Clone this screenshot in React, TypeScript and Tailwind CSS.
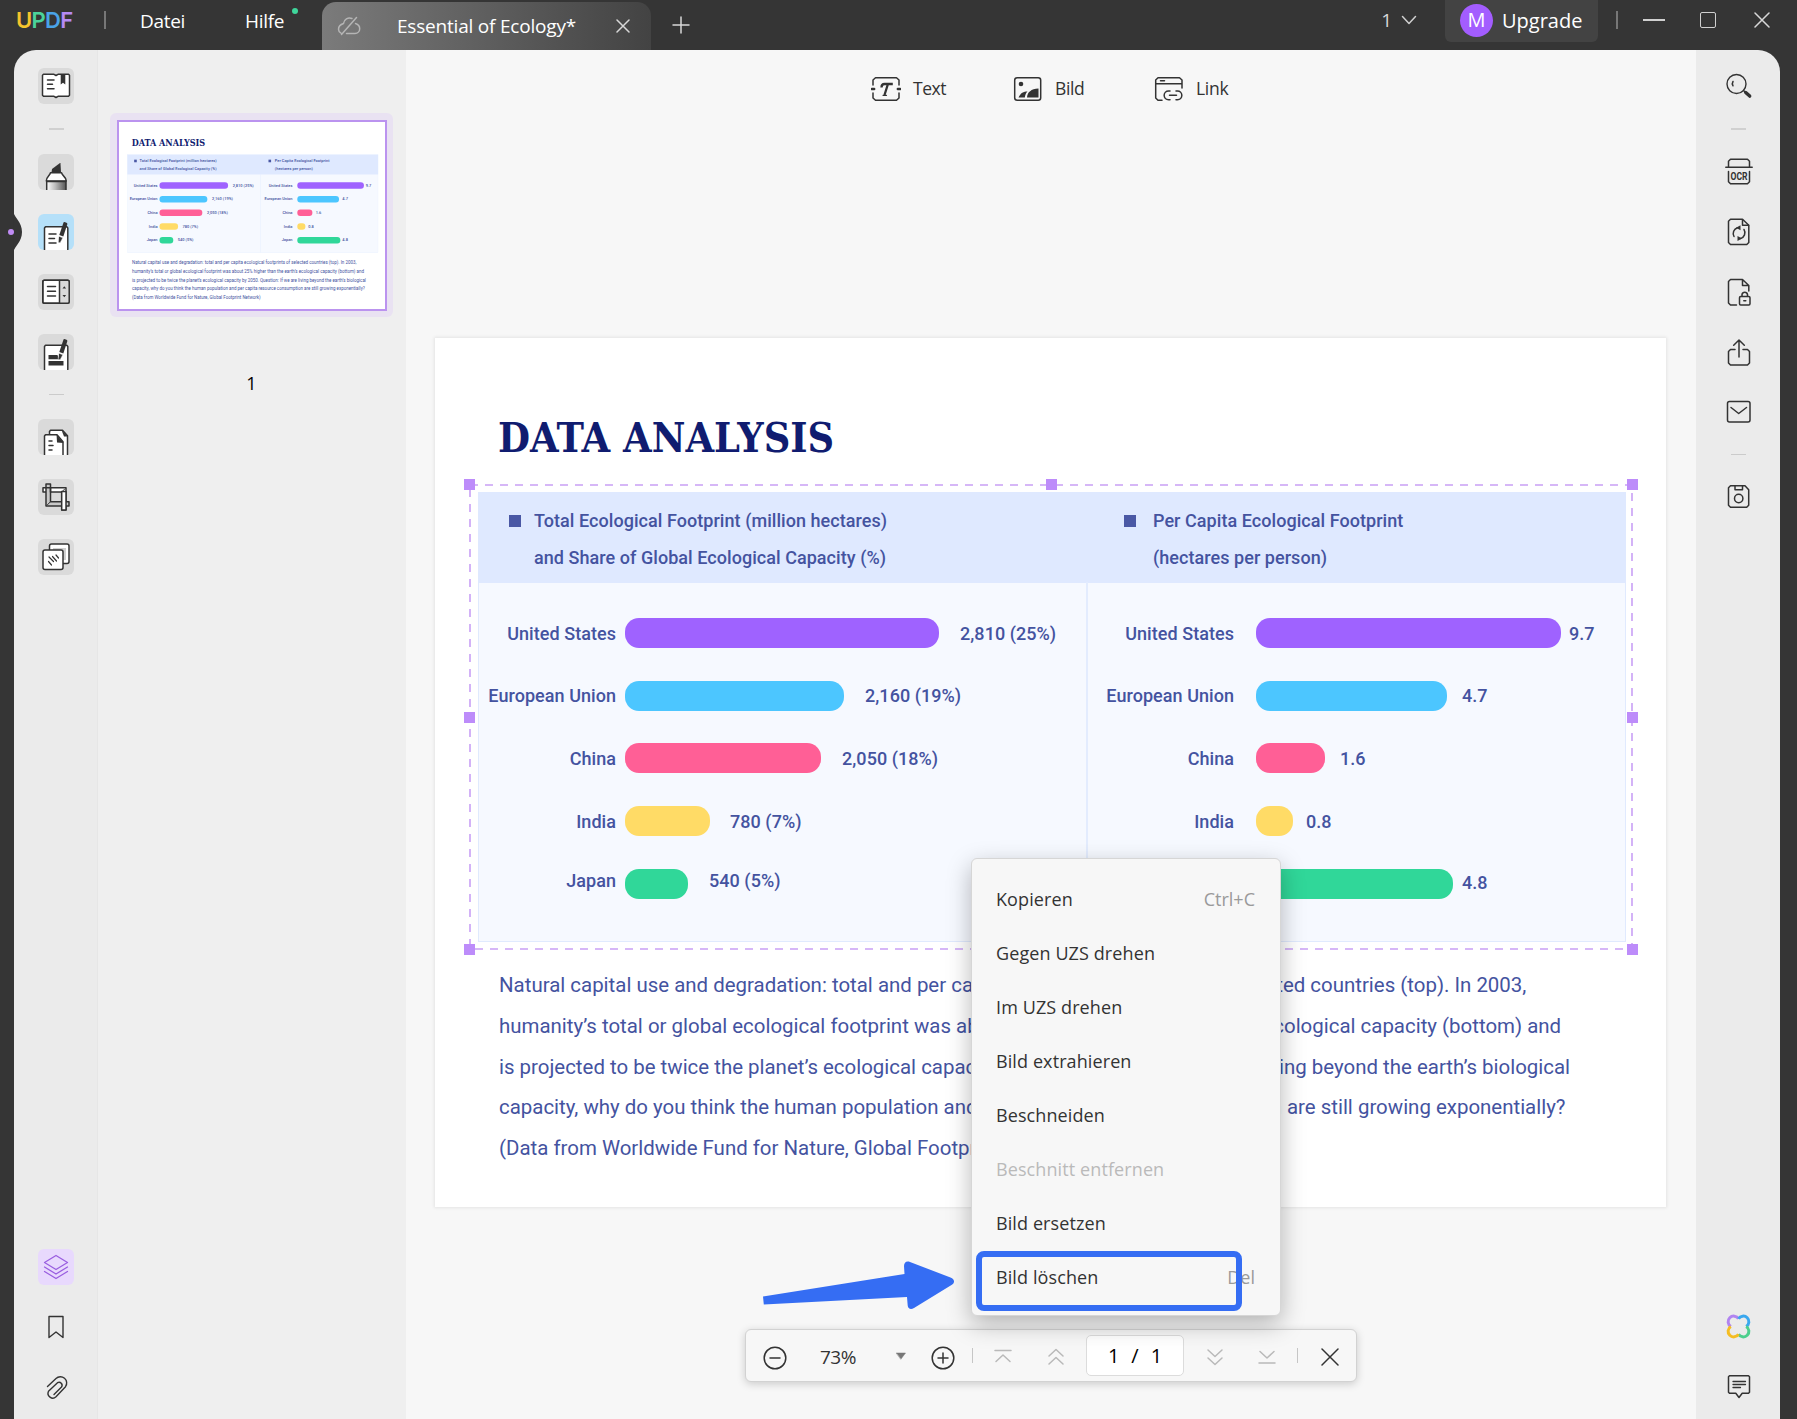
import type { ReactNode } from "react";
import clsx from "clsx";

type Row = { name: string; value: string; width: number; gap: number };

const barColors = ["#9f62ff", "#4cc6ff", "#ff5f96", "#ffdb66", "#30d799"];

const totalRows: Row[] = [
  { name: "United States", value: "2,810 (25%)", width: 314, gap: 21 },
  { name: "European Union", value: "2,160 (19%)", width: 219, gap: 21 },
  { name: "China", value: "2,050 (18%)", width: 196, gap: 21 },
  { name: "India", value: "780 (7%)", width: 85, gap: 20 },
  { name: "Japan", value: "540 (5%)", width: 63, gap: 21 },
];

const perCapitaRows: Row[] = [
  { name: "United States", value: "9.7", width: 305, gap: 8 },
  { name: "European Union", value: "4.7", width: 191, gap: 15 },
  { name: "China", value: "1.6", width: 69, gap: 15 },
  { name: "India", value: "0.8", width: 37, gap: 13 },
  { name: "Japan", value: "4.8", width: 197, gap: 9 },
];

const paragraph = [
  "Natural capital use and degradation: total and per capita ecological footprints of selected countries (top). In 2003,",
  "humanity’s total or global ecological footprint was about 25% higher than the earth’s ecological capacity (bottom) and",
  "is projected to be twice the planet’s ecological capacity by 2050. Question: If we are living beyond the earth’s biological",
  "capacity, why do you think the human population and per capita resource consumption are still growing exponentially?",
  "(Data from Worldwide Fund for Nature, Global Footprint Network)",
];

const menuItems = [
  { label: "Kopieren", shortcut: "Ctrl+C" },
  { label: "Gegen UZS drehen" },
  { label: "Im UZS drehen" },
  { label: "Bild extrahieren" },
  { label: "Beschneiden" },
  { label: "Beschnitt entfernen", disabled: true },
  { label: "Bild ersetzen" },
  { label: "Bild löschen", shortcut: "Del" },
];

function Icon({ w, h, children, className }: { w: number; h: number; children: ReactNode; className?: string }) {
  return (
    <svg
      width={w}
      height={h}
      viewBox={`0 0 ${w} ${h}`}
      fill="none"
      stroke="currentColor"
      strokeWidth={1.5}
      strokeLinecap="round"
      strokeLinejoin="round"
      className={clsx("shrink-0", className)}
    >
      {children}
    </svg>
  );
}

function Tile({ color = "bg-[#dadada]", className, children }: { color?: string; className?: string; children: ReactNode }) {
  return (
    <button className={clsx("size-9 shrink-0 overflow-hidden rounded-[6px]", color, className)}>
      <Icon w={36} h={36}>
        {children}
      </Icon>
    </button>
  );
}

function Pen() {
  return (
    <g fill="#333" stroke="none">
      <path d="M25.6 8.2l1-.1 2.4.9.4 1-4.1 12.4-4-1.4z" />
      <path d="M20.9 22.3l3.9 1.4-2.4 4.7-1.5.5-.5-1.2z" stroke="#fff" strokeWidth=".5" />
    </g>
  );
}

function Logo() {
  return (
    <div className="flex h-10 w-[58px] items-center font-['Inter',sans-serif] text-[22px] leading-none font-semibold tracking-[-0.7px]">
      <span className="text-[#f6c42d]">U</span>
      <span className="text-[#4bd29a]">P</span>
      <span className="text-[#4aa3e8]">D</span>
      <span className="text-[#b68af5]">F</span>
    </div>
  );
}

function TitleBar() {
  return (
    <header className="flex h-[50px] shrink-0 items-start text-[19px] text-white">
      <div className="ml-[16px]">
        <Logo />
      </div>
      <div className="mt-[11px] ml-[30px] h-[18px] w-[2px] bg-[#777]" />
      <span className="mt-[7px] ml-[34px] w-[46px] leading-7 tracking-[-0.3px]">Datei</span>
      <span className="mt-[7px] ml-[59px] w-[47px] leading-7 tracking-[-0.3px]">Hilfe</span>
      <span className="mt-2 size-[6px] rounded-full bg-[#3fd69b]" />
      <div className="mt-[2px] ml-[24px] flex h-12 w-[329px] items-center rounded-t-[14px] bg-linear-to-r from-[#7b7b7b] to-[#434343] pl-[15px]">
        <Icon w={24} h={20} className="text-[#b5b5b5]">
          <path d="M15 2.500a6 6 0 0 0-8.500 5C3.500 8.500 1.500 10.500 1.500 13.300a4.500 4.500 0 0 0 2.500 3.900M18.500 7.500c2.800.8 4.200 2.800 4.200 5.200a4.700 4.700 0 0 1-4.700 4.700H9.500M19.500 1.500L4.500 18.500" />
        </Icon>
        <span className="ml-[36px] w-[190px] leading-7 tracking-[-0.2px]">Essential of Ecology*</span>
        <Icon w={14} h={14} className="ml-[29px] text-[#d8d8d8]">
          <path d="M1 1l12 12M13 1L1 13" />
        </Icon>
      </div>
      <Icon w={18} h={18} className="mt-4 ml-[21px] text-[#d8d8d8]">
        <path d="M9 1v16M1 9h16" />
      </Icon>
      <span className="mt-[6px] ml-auto leading-7 text-[#d8d8d8]">1</span>
      <Icon w={16} h={12} className="mt-[14px] ml-[9px] text-[#d0d0d0]">
        <path d="M1.5 2.500L8 9.500l6.500-7" />
      </Icon>
      <div className="ml-[28px] flex h-[42px] w-[153px] items-center rounded-b-[6px] bg-[#434343] pl-[15px] text-[20px]">
        <span className="-mt-[2px] flex size-[33px] items-center justify-center rounded-full bg-[#a35dff]">M</span>
        <span className="ml-[9px]">Upgrade</span>
      </div>
      <div className="mt-[11px] ml-[18px] h-[18px] w-[2px] bg-[#777]" />
      <div className="mt-[19px] ml-[25px] h-[1.5px] w-[22px] bg-[#d0d0d0]" />
      <div className="mt-3 ml-[35px] size-4 rounded-[2px] border-[1.5px] border-[#d0d0d0]" />
      <Icon w={16} h={16} className="mt-3 mr-[27px] ml-[38px] text-[#d8d8d8]">
        <path d="M1 1l14 14M15 1L1 15" />
      </Icon>
    </header>
  );
}

function LeftRail() {
  return (
    <nav className="relative flex w-[83px] shrink-0 flex-col bg-[#ebebeb] pt-[18px] pl-6 text-[#333]">
      {/* notch that marks the active tool */}
      <svg className="absolute top-[160px] -left-[14px]" width="24" height="44" viewBox="0 0 24 44">
        <path d="M13.5 2c1 6 8.500 10 8.500 20s-7.500 14-8.500 20z" fill="#353535" />
        <circle cx="11" cy="22" r="3" fill="#c08cf5" />
      </svg>

      <Tile>
        <path d="M5.5 6.300H16l2 1.200 2-1.200h10.500l1 1v20l-1 1H20l-2 1.200-2-1.200H5.500l-1-1v-20z" fill="#fff" />
        <path d="M22.7 6.500h4.600v10L25 14.700l-2.300 1.800z" fill="#333" stroke="none" />
        <path d="M9.5 12h6.500M9.500 16.300h5M9.500 20.700h6.500" />
      </Tile>
      <div className="mt-6 ml-[11px] h-[2px] w-[15px] bg-[#d0d0d0]" />
      <Tile className="mt-6">
        <defs>
          <linearGradient id="marker">
            <stop offset="0" stopColor="#fff" />
            <stop offset=".45" stopColor="#bbb" />
            <stop offset="1" stopColor="#555" />
          </linearGradient>
        </defs>
        <path d="M13.5 18.500l.5-3.500 8-6 .5.500.5 9z" fill="#333" stroke="none" />
        <path d="M12.5 18.700h11c.5 3.300 4.800 4 4.800 8.300H8.300c0-4.300 3.700-5 4.200-8.300z" fill="#fff" />
        <path d="M8.7 27.500h19.300V38H8.700z" fill="url(#marker)" />
      </Tile>
      <Tile color="bg-[#b5e0f9]" className="mt-6">
        <path d="M6.5 38V14l1-1.300h21.300l1 1.300v24z" fill="#fff" />
        <path d="M11 20h7M11 24.500h5.500M11 29h7" />
        <Pen />
      </Tile>
      <Tile className="mt-6">
        <rect x="4.8" y="6.3" width="26.4" height="23" rx="1.5" fill="#fff" />
        <path d="M21.5 6.300h9.700v23h-9.700z" fill="#dadada" stroke="none" />
        <rect x="4.8" y="6.3" width="26.4" height="23" rx="1.5" />
        <path d="M21.5 6.500v22.800M9.500 12.500h8M9.500 17.200h8M9.500 22h8" />
        <path d="M24.5 14.500l1.800-2.200 1.800 2.200zM24.500 21l1.800 2.200 1.800-2.200z" fill="#333" stroke="none" />
      </Tile>
      <Tile className="mt-6">
        <path d="M6.5 38V12.500l1-1.300h21.300l1 1.300V38z" fill="#fff" />
        <path d="M10.5 21h9l1.500 4.300H10.500zM10.500 27h15v4.500h-15z" fill="#333" stroke="none" />
        <g transform="translate(0 -3)">
          <Pen />
        </g>
      </Tile>
      <div className="mt-6 ml-[11px] h-px w-[15px] bg-[#cbcbcb]" />
      <Tile className="mt-6">
        <path d="M11.5 16v-3.500l1-1.300h12l5 5.500V38h-5" fill="#fff" />
        <path d="M23.5 11l6.500 6.500h-4z" fill="#333" stroke="none" />
        <path d="M6.5 38V17l1-1.300H19l6 7V38z" fill="#fff" />
        <path d="M18.5 15.500l7 8.500-6.500-.5z" fill="#333" stroke="none" />
        <path d="M11 22h3M11 26.500h4M11 31h3" />
      </Tile>
      <Tile className="mt-6">
        <path d="M5 8.700h23V31h-4.300V13H5z" fill="#fff" />
        <path d="M8 5h4.500v17.700H31V27H8z" fill="#c8c8c8" />
        <path d="M8 8.700h4.500v4.300" />
        <path d="M23.7 12.500h4.300V31h-4.300z" fill="#fff" />
        <path d="M9.5 25.700l3-3M23.700 13l3-3" strokeWidth="1" />
      </Tile>
      <Tile className="mt-6">
        <rect x="11.5" y="5" width="19.5" height="19.5" rx="2" fill="#fff" />
        <path d="M15 9h13v12h-3V11H15z" fill="#cfcfcf" stroke="none" />
        <rect x="5" y="11" width="20" height="19.5" rx="2" fill="#fff" />
        <path d="M14.500 17.500l4 4.500M11 18l4.500 4.500M10.500 22.500l3 3.500M18 16l2.500 3" strokeWidth="1.2" />
      </Tile>

      <Tile color="bg-[#e8d9fd]" className="mt-[674px] text-[#9a5fe0]">
        <path d="M18 6.500l11.500 7L18 20.500 6.500 13.500zM6.500 18L18 25l11.500-7M6.500 22.500L18 29.500l11.500-7" strokeWidth="1.3" />
      </Tile>
      <Icon w={36} h={26} className="mt-[29px]">
        <path d="M11 2.500h14v21l-7-5.500-7 5.500z" strokeWidth="1.4" />
      </Icon>
      <Icon w={36} h={28} className="mt-[33px]">
        <path
          d="M9.5 12.500l8.500-8a6.300 6.300 0 0 1 9.500 8.200L18 22.700a4.700 4.700 0 0 1-7.500-5.400l9-8.600a3 3 0 0 1 4 4.300l-7.500 7.500"
          transform="translate(0 1)"
          strokeWidth="1.4"
        />
      </Icon>
    </nav>
  );
}

function RightRail() {
  return (
    <nav className="flex w-[84px] shrink-0 flex-col items-center bg-[#ebebeb] pt-[23px] pl-[2px] text-[#333]">
      <Icon w={28} h={28}>
        <circle cx="11.5" cy="11" r="9.5" strokeWidth="1.4" />
        <path d="M8 8.500c-.8 1.300-.8 3 0 4.300" />
        <path d="M18.5 17.500l2 1.700" />
        <path d="M20.7 19.500l4 3.600" strokeWidth="3.4" />
      </Icon>
      <div className="mt-[27px] mr-[2px] h-[2px] w-[15px] bg-[#d0d0d0]" />
      <Icon w={28} h={28} className="mt-[28px]">
        <path d="M3.5 8.500V3.200l2-2h17l2 2v5.300M.8 9.300h26.400M3.500 13.500v10.300l2 2h17l2-2V13.500" />
        <text
          x="14"
          y="22"
          textAnchor="middle"
          textLength="17"
          lengthAdjust="spacingAndGlyphs"
          fill="#333"
          stroke="none"
          className="font-['Roboto',sans-serif] text-[11px] font-bold"
        >
          OCR
        </text>
      </Icon>
      <Icon w={28} h={28} className="mt-[32px]">
        <path d="M5.5 1.200h12l6.300 6v17.300l-2 2H5.500l-2-2V3.200z" />
        <path d="M17.5 2v5.200h6" />
        <path d="M9 18.500a6 6 0 0 1 3.500-8.700M19 11.500a6 6 0 0 1-3.500 9" />
        <path d="M15.500 7.200v5L11 9.700zM12.500 18v5l4.500-2.500z" fill="#333" stroke="none" />
      </Icon>
      <Icon w={28} h={30} className="mt-8">
        <path d="M11.5 27h-6l-2-2V3.500l2-2h12l6.300 6V13M17.500 2v5.500h6" />
        <rect x="14.5" y="18.500" width="10.500" height="8.500" rx="1.2" />
        <path d="M17 18v-1.500a2.800 2.800 0 0 1 5.500 0V18M18.800 22.700h2" />
      </Icon>
      <Icon w={28} h={28} className="mt-[31px]">
        <path d="M10 10.500H5.500l-2 2V24l2 2h17l2-2V12.500l-2-2H18M14 18V1.500M8.700 6.200L14 1l5.300 5.200" />
      </Icon>
      <Icon w={28} h={26} className="mt-[33px]">
        <rect x="2.5" y="1.5" width="22.5" height="20.5" rx="2" />
        <path d="M6 7.500l7.700 6L21.500 7.500" />
      </Icon>
      <div className="mt-[28px] mr-[2px] h-px w-[15px] bg-[#cbcbcb]" />
      <Icon w={28} h={26} className="mt-[29px]">
        <path d="M5.5 1.700h14.500l3.700 4v15.500l-2 2H5.500l-2-2V3.700z" />
        <path d="M10 2v3.700h7.500V2" />
        <circle cx="13.7" cy="14.5" r="4.2" />
      </Icon>
      <Icon w={28} h={28} className="mt-[803px]">
        <g strokeWidth="3" strokeLinecap="butt">
          <path d="M5.800 13.500A5.600 5.600 0 1 1 13.500 5.800" stroke="#b184f0" />
          <path d="M13.500 5.800A5.600 5.600 0 1 1 21.200 13.500" stroke="#3aa7ee" />
          <path d="M21.200 13.500A5.600 5.600 0 1 1 13.500 21.200" stroke="#4dcf8d" />
          <path d="M13.500 21.200A5.600 5.600 0 1 1 5.800 13.500" stroke="#f5bd22" />
        </g>
      </Icon>
      <Icon w={28} h={28} className="mt-[33px]">
        <path d="M4.5 1.700h19l1 1v15.600l-1 1H17.200L14 23.500l-3.200-4.200H4.500l-1-1V2.700z" />
        <path d="M8 7.500h12.500M8 10.500h12.500M8 13.500h7.500" strokeWidth="1.3" />
      </Icon>
    </nav>
  );
}

function BarColumn({ rows, labelClass, gapClass }: { rows: Row[]; labelClass: string; gapClass: string }) {
  return (
    <div className="flex flex-col gap-[32.7px] pt-[36px]">
      {rows.map((row, i) => (
        <div key={row.name} className={clsx("flex h-[30px] items-center whitespace-nowrap", gapClass)}>
          <span className={clsx("shrink-0 text-right", labelClass, i === 4 && "-mt-[6px]")}>{row.name}</span>
          <div className="flex h-full items-center">
            <div className="h-full rounded-[14px]" style={{ width: row.width, background: barColors[i] }} />
            <span
              className={clsx(i === 4 && rows === totalRows && "-mt-[6px]", i === 4 && rows === perCapitaRows && "-mt-[3px]")}
              style={{ marginLeft: row.gap }}
            >
              {row.value}
            </span>
          </div>
        </div>
      ))}
    </div>
  );
}

function Handle({ className }: { className: string }) {
  return <span className={clsx("absolute size-[11px] bg-[#bd8cfa]", className)} />;
}

function Selection() {
  return (
    <div className="absolute -top-[9px] -left-[10px] h-[466px] w-[1164px]">
      <svg className="absolute inset-0" width="1164" height="466">
        <rect x="1" y="1" width="1162" height="464" fill="none" stroke="#c9a0f5" strokeWidth="1.6" strokeDasharray="8 7" />
      </svg>
      <Handle className="-top-[5px] -left-[5px]" />
      <Handle className="-top-[5px] left-[577px]" />
      <Handle className="-top-[5px] -right-[5px]" />
      <Handle className="top-[228px] -left-[5px]" />
      <Handle className="top-[228px] -right-[5px]" />
      <Handle className="-bottom-[5px] -left-[5px]" />
      <Handle className="-right-[5px] -bottom-[5px]" />
    </div>
  );
}

function PdfPage({ selected = false }: { selected?: boolean }) {
  return (
    <article className="flex h-[869px] w-[1231px] flex-col bg-white font-['Roboto',sans-serif] text-[#4453a0]">
      <h1 className="mt-[74px] ml-[63px] font-['DejaVu_Serif_Condensed','DejaVu_Serif',serif] text-[41px] leading-[52px] font-bold whitespace-nowrap text-[#101c70]">
        DATA ANALYSIS
      </h1>
      <section className="relative mt-[28px] ml-[43px] h-[450px] w-[1148px] border border-[#e0eafe] bg-[#f6f9ff] text-[18px] font-medium tracking-[0.05px]">
        <div className="-m-px flex h-[91px] bg-[#dfe9ff] pt-[10px] leading-[37px]">
          <span className="mt-[13px] ml-[31px] size-3 bg-[#4a58a5]" />
          <p className="ml-[13px] w-[590px]">
            Total Ecological Footprint (million hectares)
            <br />
            and Share of Global Ecological Capacity (%)
          </p>
          <span className="mt-[13px] size-3 bg-[#4a58a5]" />
          <p className="ml-[17px]">
            Per Capita Ecological Footprint
            <br />
            (hectares per person)
          </p>
        </div>
        <div className="flex h-[358px]">
          <div className="w-[609px] border-r-2 border-[#e3ecfe]">
            <BarColumn rows={totalRows} labelClass="w-[137px]" gapClass="gap-[9px]" />
          </div>
          <BarColumn rows={perCapitaRows} labelClass="w-[146px]" gapClass="gap-[22px]" />
        </div>
        {selected && <Selection />}
      </section>
      <div className="mt-[23px] ml-[64px] text-[20.46px] leading-[40.8px] whitespace-nowrap">
        {paragraph.map((line) => (
          <p key={line}>{line}</p>
        ))}
      </div>
    </article>
  );
}

function Thumbnails() {
  return (
    <aside className="flex w-[309px] shrink-0 flex-col items-center bg-[#efefef] pt-[63px] shadow-[inset_1px_0_0_#e6e6e6]">
      <div className="h-[204px] w-[283px] rounded-[6px] bg-[#e9e2f2] p-[6.500px]">
        <div className="h-[191px] w-[270px] overflow-hidden border-2 border-[#bb93ef] bg-white">
          <div className="-mt-px -ml-px h-[869px] w-[1231px] origin-top-left scale-[0.2184]">
            <PdfPage />
          </div>
        </div>
      </div>
      <span className="mt-[52px] text-[18px] leading-7 text-black">1</span>
    </aside>
  );
}

function EditTools() {
  return (
    <div className="flex h-[77px] items-center pl-[465px] text-[17.5px] tracking-[-0.5px] text-[#333]">
      <Icon w={30} h={26}>
        <path d="M2 9V4l2.500-2.300h21L28 4v5M2 17v5l2.500 2.300h21L28 22v-5" />
        <path d="M.8 13h2.400M26.800 13h2.400" strokeWidth="2.4" />
        <path d="M10.500 11.500c0-2.500 1-3.500 3-3.500h8.300M16.800 8.500L13.500 19" strokeWidth="2.3" strokeLinecap="butt" />
        <path d="M12 19.300h3.500" strokeWidth="1.2" />
      </Icon>
      <span className="ml-3 w-[100px]">Text</span>
      <Icon w={30} h={26}>
        <rect x="1.7" y="1.7" width="26" height="22.6" rx="2.5" />
        <circle cx="8" cy="8" r="2.3" fill="#333" stroke="none" />
        <path d="M5.500 21.500c2-4.500 5-6 9-6-1.800 1.500-2.200 3.500-2.700 6zM14 21.500c.5-5.500 4-8.500 11.500-9v9z" fill="#333" stroke="none" />
      </Icon>
      <span className="ml-[12px] w-[99px] tracking-[-0.4px]">Bild</span>
      <Icon w={30} h={26}>
        <path d="M8 24.300H4L1.700 22V4L4 1.700h21.500L28 4v8M1.700 7.700H28M6.500 4.700h4" />
        <path d="M16 15h-1.500a4.300 4.300 0 0 0 0 8.700H16M22 15h1.500a4.300 4.300 0 0 1 0 8.700H22M15.500 19.300h7" />
      </Icon>
      <span className="ml-[12px] tracking-[-0.3px]">Link</span>
    </div>
  );
}

function ContextMenu() {
  return (
    <div className="absolute top-[808px] left-[565px] flex h-[458px] w-[310px] flex-col rounded-[6px] border border-[#d6d6d6] bg-[#f7f7f7] pt-[13px] text-[18px] shadow-[0_8px_24px_rgba(0,0,0,0.28)]">
      {menuItems.map((item) => (
        <div
          key={item.label}
          className={clsx(
            "flex h-[54px] items-center justify-between pr-[25px] pl-6",
            item.disabled ? "text-[#bababa]" : "text-[#333]"
          )}
        >
          <span className="tracking-[0.1px]">{item.label}</span>
          <span className="text-[#9a9a9a]">{item.shortcut}</span>
        </div>
      ))}
      <div className="absolute top-[392px] left-[4px] h-[60px] w-[266px] rounded-[8px] border-[6px] border-[#356df3]" />
    </div>
  );
}

function ZoomBar() {
  return (
    <div className="relative mt-[122px] ml-[339px] flex h-[53px] w-[612px] items-center rounded-[6px] border border-[#d2d2d2] bg-[#f7f7f7] pb-px pl-[17px] text-[#333] shadow-[0_2px_8px_rgba(0,0,0,0.18)]">
      <Icon w={24} h={24} className="mt-[5px]">
        <circle cx="12" cy="12" r="10.8" />
        <path d="M7 12h10" />
      </Icon>
      <span className="mt-[5px] ml-[33px] w-[42px] text-[19px] tracking-[-0.5px]">73%</span>
      <Icon w={12} h={10} className="mt-px ml-[33px] text-[#777]">
        <path d="M1.500 2h9L6 8z" fill="currentColor" strokeWidth=".5" />
      </Icon>
      <Icon w={24} h={24} className="mt-[5px] ml-[24px]">
        <circle cx="12" cy="12" r="10.8" />
        <path d="M7 12h10M12 7v10" />
      </Icon>
      <div className="ml-[17px] h-[15px] w-px bg-[#c6c6c6]" />
      <Icon w={18} h={18} className="mt-1 ml-[21px] text-[#b9b9b9]">
        <path d="M1 2.500h16M2 13.500l7-6.500 7 6.500" />
      </Icon>
      <Icon w={18} h={18} className="mt-1 ml-[35px] text-[#b9b9b9]">
        <path d="M2 8l7-6.500L16 8M2 16l7-6.500 7 6.500" />
      </Icon>
      <div className="ml-[21px] flex h-[41px] w-[98px] items-center justify-center gap-[12px] rounded-[5px] border border-[#dcdcdc] bg-white pt-[2px] text-[20px] text-black">
        <span>1</span>
        <span>/</span>
        <span>1</span>
      </div>
      <Icon w={18} h={18} className="mt-1 ml-[22px] text-[#b9b9b9]">
        <path d="M2 2l7 6.500L16 2M2 10l7 6.500 7-6.500" />
      </Icon>
      <Icon w={18} h={18} className="mt-1 ml-[34px] text-[#b9b9b9]">
        <path d="M2 3.500l7 6.500 7-6.500M1 15h16" />
      </Icon>
      <div className="ml-[21px] h-[15px] w-px bg-[#c6c6c6]" />
      <Icon w={18} h={18} className="mt-1 ml-[23px]">
        <path d="M1 1l16 16M17 1L1 17" />
      </Icon>
    </div>
  );
}

function Arrow() {
  return (
    <svg className="absolute top-[1208px] left-[354px]" width="200" height="56" viewBox="760 1258 200 56">
      <path
        d="M763 1296.500L904.500 1274l-.5-8c0-3.500 2.500-5.500 6-4l40.500 15.500c4.500 1.800 4.500 5.500 1 7.500l-37.500 23c-3.500 2-6 .5-6.300-2.500l-.7-8.500-143.200 7.500z"
        fill="#356df3"
      />
    </svg>
  );
}

export default function App() {
  return (
    <div className="flex h-[1419px] w-[1797px] flex-col overflow-hidden bg-[#353535] font-['Open_Sans','Noto_Sans',sans-serif]">
      <TitleBar />
      <div className="ml-[14px] flex w-[1766px] flex-1">
        <div className="flex [&>nav]:rounded-tl-[22px]">
          <LeftRail />
        </div>
        <Thumbnails />
        <main className="relative w-[1290px] shrink-0 bg-[#f7f7f7]">
          <EditTools />
          <div className="mt-[211px] ml-[29px] w-[1231px] shadow-[0_0_3px_1px_rgba(0,0,0,0.08)]">
            <PdfPage selected />
          </div>
          <ZoomBar />
          <ContextMenu />
          <Arrow />
        </main>
        <div className="flex [&>nav]:rounded-tr-[22px]">
          <RightRail />
        </div>
      </div>
    </div>
  );
}
